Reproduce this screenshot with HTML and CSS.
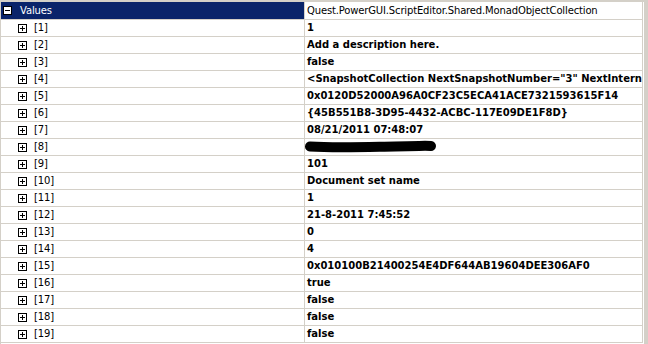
FILE: index.html
```html
<!DOCTYPE html>
<html lang="en">
<head>
  <meta charset="UTF-8" />
  <title>Values</title>
  <link rel="stylesheet" href="styles.css">
</head>
<body>

  <div class="grid">
    <div class="row head">
      <div class="name">
        <svg class="box" width="9" height="9" viewBox="0 0 9 9"><rect x="0.5" y="0.5" width="8" height="8" fill="#fff" stroke="#000"/><path d="M2 4.5h5" stroke="#000"/></svg>
        Values
      </div>
      <div class="value">Quest.PowerGUI.ScriptEditor.Shared.MonadObjectCollection</div>
    </div>

    <div class="row"><div class="name"><svg class="box" width="9" height="9" viewBox="0 0 9 9"><rect x="0.5" y="0.5" width="8" height="8" fill="#fff" stroke="#000"/><path d="M2 4.5h5M4.5 2v5" stroke="#000"/></svg>[1]</div><div class="value">1</div></div>
    <div class="row"><div class="name"><svg class="box" width="9" height="9" viewBox="0 0 9 9"><rect x="0.5" y="0.5" width="8" height="8" fill="#fff" stroke="#000"/><path d="M2 4.5h5M4.5 2v5" stroke="#000"/></svg>[2]</div><div class="value">Add a description here.</div></div>
    <div class="row"><div class="name"><svg class="box" width="9" height="9" viewBox="0 0 9 9"><rect x="0.5" y="0.5" width="8" height="8" fill="#fff" stroke="#000"/><path d="M2 4.5h5M4.5 2v5" stroke="#000"/></svg>[3]</div><div class="value">false</div></div>
    <div class="row"><div class="name"><svg class="box" width="9" height="9" viewBox="0 0 9 9"><rect x="0.5" y="0.5" width="8" height="8" fill="#fff" stroke="#000"/><path d="M2 4.5h5M4.5 2v5" stroke="#000"/></svg>[4]</div><div class="value">&lt;SnapshotCollection NextSnapshotNumber="3" NextInternalSnapshotId="3"&gt;</div></div>
    <div class="row"><div class="name"><svg class="box" width="9" height="9" viewBox="0 0 9 9"><rect x="0.5" y="0.5" width="8" height="8" fill="#fff" stroke="#000"/><path d="M2 4.5h5M4.5 2v5" stroke="#000"/></svg>[5]</div><div class="value">0x0120D52000A96A0CF23C5ECA41ACE7321593615F14</div></div>
    <div class="row"><div class="name"><svg class="box" width="9" height="9" viewBox="0 0 9 9"><rect x="0.5" y="0.5" width="8" height="8" fill="#fff" stroke="#000"/><path d="M2 4.5h5M4.5 2v5" stroke="#000"/></svg>[6]</div><div class="value">{45B551B8-3D95-4432-ACBC-117E09DE1F8D}</div></div>
    <div class="row"><div class="name"><svg class="box" width="9" height="9" viewBox="0 0 9 9"><rect x="0.5" y="0.5" width="8" height="8" fill="#fff" stroke="#000"/><path d="M2 4.5h5M4.5 2v5" stroke="#000"/></svg>[7]</div><div class="value">08/21/2011 07:48:07</div></div>
    <div class="row"><div class="name"><svg class="box" width="9" height="9" viewBox="0 0 9 9"><rect x="0.5" y="0.5" width="8" height="8" fill="#fff" stroke="#000"/><path d="M2 4.5h5M4.5 2v5" stroke="#000"/></svg>[8]</div><div class="value redacted">
      <svg width="132" height="16" viewBox="0 0 132 16"><path d="M5 7.5C30 9 60 8 90 7.5S118 6.5 126 7" stroke="#000" stroke-width="10" stroke-linecap="round" fill="none"/></svg>
    </div></div>
    <div class="row"><div class="name"><svg class="box" width="9" height="9" viewBox="0 0 9 9"><rect x="0.5" y="0.5" width="8" height="8" fill="#fff" stroke="#000"/><path d="M2 4.5h5M4.5 2v5" stroke="#000"/></svg>[9]</div><div class="value">101</div></div>
    <div class="row"><div class="name"><svg class="box" width="9" height="9" viewBox="0 0 9 9"><rect x="0.5" y="0.5" width="8" height="8" fill="#fff" stroke="#000"/><path d="M2 4.5h5M4.5 2v5" stroke="#000"/></svg>[10]</div><div class="value">Document set name</div></div>
    <div class="row"><div class="name"><svg class="box" width="9" height="9" viewBox="0 0 9 9"><rect x="0.5" y="0.5" width="8" height="8" fill="#fff" stroke="#000"/><path d="M2 4.5h5M4.5 2v5" stroke="#000"/></svg>[11]</div><div class="value">1</div></div>
    <div class="row"><div class="name"><svg class="box" width="9" height="9" viewBox="0 0 9 9"><rect x="0.5" y="0.5" width="8" height="8" fill="#fff" stroke="#000"/><path d="M2 4.5h5M4.5 2v5" stroke="#000"/></svg>[12]</div><div class="value">21-8-2011 7:45:52</div></div>
    <div class="row"><div class="name"><svg class="box" width="9" height="9" viewBox="0 0 9 9"><rect x="0.5" y="0.5" width="8" height="8" fill="#fff" stroke="#000"/><path d="M2 4.5h5M4.5 2v5" stroke="#000"/></svg>[13]</div><div class="value">0</div></div>
    <div class="row"><div class="name"><svg class="box" width="9" height="9" viewBox="0 0 9 9"><rect x="0.5" y="0.5" width="8" height="8" fill="#fff" stroke="#000"/><path d="M2 4.5h5M4.5 2v5" stroke="#000"/></svg>[14]</div><div class="value">4</div></div>
    <div class="row"><div class="name"><svg class="box" width="9" height="9" viewBox="0 0 9 9"><rect x="0.5" y="0.5" width="8" height="8" fill="#fff" stroke="#000"/><path d="M2 4.5h5M4.5 2v5" stroke="#000"/></svg>[15]</div><div class="value">0x010100B21400254E4DF644AB19604DEE306AF0</div></div>
    <div class="row"><div class="name"><svg class="box" width="9" height="9" viewBox="0 0 9 9"><rect x="0.5" y="0.5" width="8" height="8" fill="#fff" stroke="#000"/><path d="M2 4.5h5M4.5 2v5" stroke="#000"/></svg>[16]</div><div class="value">true</div></div>
    <div class="row"><div class="name"><svg class="box" width="9" height="9" viewBox="0 0 9 9"><rect x="0.5" y="0.5" width="8" height="8" fill="#fff" stroke="#000"/><path d="M2 4.5h5M4.5 2v5" stroke="#000"/></svg>[17]</div><div class="value">false</div></div>
    <div class="row"><div class="name"><svg class="box" width="9" height="9" viewBox="0 0 9 9"><rect x="0.5" y="0.5" width="8" height="8" fill="#fff" stroke="#000"/><path d="M2 4.5h5M4.5 2v5" stroke="#000"/></svg>[18]</div><div class="value">false</div></div>
    <div class="row"><div class="name"><svg class="box" width="9" height="9" viewBox="0 0 9 9"><rect x="0.5" y="0.5" width="8" height="8" fill="#fff" stroke="#000"/><path d="M2 4.5h5M4.5 2v5" stroke="#000"/></svg>[19]</div><div class="value">false</div></div>
  </div>

</body>
</html>
```

FILE: styles.css
```css
* {
  box-sizing: border-box;
  margin: 0;
  padding: 0;
}

body {
  background: #d4d0c8;
  font-family: 'DejaVu Sans', sans-serif;
  font-size: 10px;
  color: #000;
  height: 344px;
  overflow: hidden;
}

.grid {
  width: 644px;
  height: 344px;
  background: #fff;
  border-top: 2px solid #d4d0c8;
  border-left: 1px solid #d4d0c8;
  padding-right: 1px;
}

.row {
  display: grid;
  grid-template-columns: 304px 338px;
  height: 17px;
  border-bottom: 1px solid #d4d0c8;
}

.row.head {
  height: 18px;
}

.name {
  display: flex;
  align-items: center;
  padding-left: 17px;
  border-right: 1px solid #d4d0c8;
  line-height: 16px;
  letter-spacing: -0.15px;
  white-space: nowrap;
}

.name .box {
  flex: none;
  margin-right: 7px;
}

.value {
  padding-left: 2px;
  border-right: 1px solid #d4d0c8;
  line-height: 16px;
  font-weight: bold;
  white-space: nowrap;
  overflow: hidden;
}

.head .name {
  background: #0a246a;
  color: #fff;
  padding-left: 2px;
  line-height: 17px;
}

.head .name .box {
  margin-right: 8px;
}

.head .value {
  font-weight: normal;
  letter-spacing: -0.15px;
  line-height: 17px;
}

.redacted svg {
  display: block;
  margin-left: -2px;
}
```
